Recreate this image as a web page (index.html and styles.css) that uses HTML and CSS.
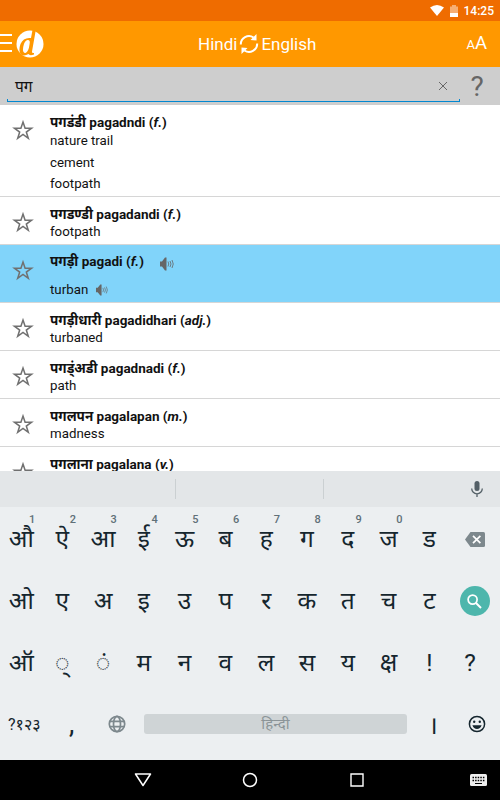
FILE: index.html
```
<!DOCTYPE html>
<html lang="hi">
<head>
  <meta charset="utf-8">
  <title>Hindi English Dictionary</title>
  <link rel="stylesheet" href="styles.css">
</head>
<body>
  <svg class="defs">
    <symbol id="star" viewBox="0 0 24 24">
      <path d="M12 4l2.100 6.200h6.500l-5.300 3.900 2 6.300-5.300-3.900-5.300 3.900 2-6.300-5.300-3.900h6.500z" fill="none" stroke="#707070" stroke-width="1.500"/>
    </symbol>
    <symbol id="speaker" viewBox="0 0 14 14">
      <path d="M0 4.500h2L5 .5h1.500v13H5L2 9.500H0z" fill="#666"/>
      <path d="M8 4.500q1.500 2.500 0 5M10 4q2 3 0 6M12 3q2.500 4 0 8" fill="none" stroke="#666" stroke-width=".8"/>
    </symbol>
  </svg>

  <div class="status">
    <svg width="14" height="11" viewBox="0 0 14 11"><path d="M0 2.500Q7-2.500 14 2.500L7 11z" fill="#fff"/></svg>
    <svg class="battery" width="8" height="12" viewBox="0 0 8 12"><path d="M0 1.500h2V0h4v1.500h2V12H0z" fill="#fff" opacity=".45"/><path d="M0 8h8v4H0z" fill="#fff"/></svg>
    <span>14:25</span>
  </div>

  <div class="toolbar">
    <div class="menu"><i></i><i></i><i></i></div>
    <svg class="logo" width="28" height="28" viewBox="0 0 28 28">
      <circle cx="14" cy="14" r="13.500" fill="#fff"/>
      <path d="M16.500 0h3.300L16 21.500q-.3 2 2 1.500v1.500q-4.500 1.500-5.500-.5-4.500 2.500-7.500.5-3-3.500-.5-10.500Q7.500 7 15 8z" fill="#ff9800"/>
      <path d="M11.500 10q3-.3 2.100 4-1 8-4.100 9-3.300 0-2.300-6 1-6 4.300-7z" fill="#fff"/>
    </svg>
    <div class="langs">
      <span>Hindi</span>
      <svg width="20" height="20" viewBox="0 0 20 20">
        <path d="M1.800 10.500A8.200 8.200 0 0 1 14.500 3.500M18.200 9.500A8.200 8.200 0 0 1 5.500 16.500" fill="none" stroke="#fff" stroke-width="2"/>
        <path d="M17.500 0v6.500l-6-.5zM2.500 20v-6.500l6 .5z" fill="#fff"/>
      </svg>
      <span>English</span>
    </div>
    <div class="size"><small>A</small>A</div>
  </div>

  <div class="search">
    <div class="field">
      <span>पग</span>
      <svg width="10" height="10" viewBox="0 0 10 10"><path d="M1 1l8 8M9 1l-8 8" stroke="#666" stroke-width="1"/></svg>
    </div>
    <div class="help">?</div>
  </div>

  <div class="results">
    <div class="entry first">
      <svg class="star"><use href="#star"/></svg>
      <div>
        <h4>पगडंडी pagadndi (<em>f.</em>)</h4>
        <p>nature trail</p>
        <p>cement</p>
        <p>footpath</p>
      </div>
    </div>
    <div class="entry">
      <svg class="star"><use href="#star"/></svg>
      <div>
        <h4>पगडण्डी pagadandi (<em>f.</em>)</h4>
        <p>footpath</p>
      </div>
    </div>
    <div class="entry selected">
      <svg class="star"><use href="#star"/></svg>
      <div>
        <h4>पगड़ी pagadi (<em>f.</em>) <svg class="speaker"><use href="#speaker"/></svg></h4>
        <p>turban <svg class="speaker small"><use href="#speaker"/></svg></p>
      </div>
    </div>
    <div class="entry">
      <svg class="star"><use href="#star"/></svg>
      <div>
        <h4>पगड़ीधारी pagadidhari (<em>adj.</em>)</h4>
        <p>turbaned</p>
      </div>
    </div>
    <div class="entry">
      <svg class="star"><use href="#star"/></svg>
      <div>
        <h4>पगड्ंअडी pagadnadi (<em>f.</em>)</h4>
        <p>path</p>
      </div>
    </div>
    <div class="entry">
      <svg class="star"><use href="#star"/></svg>
      <div>
        <h4>पगलपन pagalapan (<em>m.</em>)</h4>
        <p>madness</p>
      </div>
    </div>
    <div class="entry">
      <svg class="star"><use href="#star"/></svg>
      <div>
        <h4>पगलाना pagalana (<em>v.</em>)</h4>
      </div>
    </div>
  </div>

  <div class="suggest">
    <span></span><span></span>
    <svg width="12" height="16" viewBox="0 0 12 16">
      <rect x="3.500" y="0" width="5" height="10" rx="2.500" fill="#546067"/>
      <path d="M.7 7.500a5.300 5.300 0 0 0 10.600 0M6 12.500V16" fill="none" stroke="#546067" stroke-width="1.300"/>
    </svg>
  </div>

  <div class="keyboard">
    <div class="keys">
      <b>औ<sup>1</sup></b><b>ऐ<sup>2</sup></b><b>आ<sup>3</sup></b><b>ई<sup>4</sup></b><b>ऊ<sup>5</sup></b><b>ब<sup>6</sup></b><b>ह<sup>7</sup></b><b>ग<sup>8</sup></b><b>द<sup>9</sup></b><b>ज<sup>0</sup></b><b>ड</b>
      <div class="action">
        <svg width="20" height="15" viewBox="0 0 20 15"><path d="M5.500 0H18.500Q20 0 20 1.500v12q0 1.500-1.500 1.500H5.500L0 7.500z" fill="#7d888d"/><path d="M8 3.800l7.400 7.400M15.400 3.800L8 11.200" stroke="#fff" stroke-width="1.700"/></svg>
      </div>
    </div>
    <div class="keys">
      <b>ओ</b><b>ए</b><b>अ</b><b>इ</b><b>उ</b><b>प</b><b>र</b><b>क</b><b>त</b><b>च</b><b>ट</b>
      <div class="action">
        <div class="go">
          <svg width="15" height="15" viewBox="0 0 15 15"><circle cx="5.600" cy="5.600" r="4.500" fill="none" stroke="#fff" stroke-width="1.700"/><path d="M9 9l5 5" stroke="#fff" stroke-width="2"/></svg>
        </div>
      </div>
    </div>
    <div class="keys">
      <b>ऑ</b><b>◌्</b><b>◌ं</b><b>म</b><b>न</b><b>व</b><b>ल</b><b>स</b><b>य</b><b>क्ष</b><b>!</b><b>?</b>
    </div>
    <div class="keys bottom">
      <span class="sym">?१२३</span>
      <span class="comma">,</span>
      <svg class="globe" width="18" height="18" viewBox="0 0 18 18"><g fill="none" stroke="#7d888d" stroke-width="1.700"><circle cx="9" cy="9" r="7.700"/><ellipse cx="9" cy="9" rx="3.500" ry="7.700"/><path d="M1.800 6.300h14.400M1.800 11.700h14.400"/></g></svg>
      <span class="space">हिन्दी</span>
      <span class="danda">।</span>
      <svg class="smile" width="18" height="18" viewBox="0 0 18 18"><circle cx="9" cy="9" r="7.600" fill="none" stroke="#15262e" stroke-width="1.500"/><circle cx="6.200" cy="6.800" r="1.200" fill="#15262e"/><circle cx="11.800" cy="6.800" r="1.200" fill="#15262e"/><path d="M4.400 10.200h9.200q-1.300 3.800-4.600 3.800t-4.600-3.800z" fill="#15262e"/></svg>
    </div>
  </div>

  <div class="navbar">
    <svg width="18" height="14" viewBox="0 0 18 14"><path d="M1.500 1h15L9 12.500z" fill="none" stroke="#fff" stroke-width="1.500" stroke-linejoin="round"/></svg>
    <svg width="16" height="16" viewBox="0 0 16 16"><circle cx="8" cy="8" r="6.500" fill="none" stroke="#fff" stroke-width="1.500"/></svg>
    <svg class="recent" width="14" height="14" viewBox="0 0 14 14"><path d="M1 1h12v12H1z" fill="none" stroke="#fff" stroke-width="1.400"/></svg>
    <svg class="ime" width="17" height="12" viewBox="0 0 17 12"><rect width="17" height="12" rx="1.500" fill="#eee"/><path d="M2.500 3.500h12M2.500 6.500h12" stroke="#000" stroke-width="1.500" stroke-dasharray="1.500 1.100"/><path d="M5 9.500h7" stroke="#000"/></svg>
  </div>
</body>
</html>
```
FILE: styles.css
```
* {
  box-sizing: border-box;
}
body {
  margin: 0;
  width: 500px;
  height: 800px;
  overflow: hidden;
  background: #fff;
  font-family: Roboto, "Noto Sans", "Noto Sans Devanagari", sans-serif;
  color: #111;
}
svg {
  display: block;
  flex: none;
}
.defs {
  display: none;
}
.status {
  height: 21px;
  background: #ef6c00;
  color: #fff;
  display: flex;
  align-items: center;
  justify-content: flex-end;
  padding-right: 6px;
  font-size: 12px;
  font-weight: 500;
}
.battery {
  margin: 0 6px 0 6px;
}
.toolbar {
  height: 46px;
  background: #ff9800;
  color: #fff;
  display: flex;
  align-items: center;
}
.menu {
  width: 12px;
  display: flex;
  flex-direction: column;
  gap: 6px;
  margin-top: -3px;
}
.menu i {
  height: 2px;
  background: #fff;
}
.logo {
  margin-left: 4px;
}
.langs {
  display: flex;
  align-items: center;
  gap: 2px;
  margin: 0 0 0 154px;
  font-size: 17px;
}
.size {
  margin: -2px 0 0 auto;
  padding-right: 13px;
  font-size: 18.500px;
}
.size small {
  font-size: 13px;
}
.search {
  height: 38px;
  background: #cecece;
  display: flex;
}
.field {
  position: relative;
  width: 453px;
  height: 28px;
  margin: 7px 0 0 7px;
  padding: 0 12px 4px 8px;
  border-bottom: 1px solid #0288d1;
  display: flex;
  align-items: center;
  justify-content: space-between;
  font-size: 15.500px;
}
/* little upturned ends of the input underline */
.field::after {
  content: "";
  position: absolute;
  left: 0;
  right: 0;
  bottom: 0;
  height: 2px;
  border: 1px solid #0288d1;
  border-width: 0 1px;
}
.help {
  width: 34px;
  text-align: center;
  font-size: 28px;
  line-height: 39px;
  color: #666;
}
.results {
  height: 366px;
  overflow: hidden;
}
.entry {
  height: 48px;
  border-bottom: 1px solid #d6d6d6;
  display: flex;
}
.entry.first {
  height: 92px;
}
.entry.selected {
  height: 58px;
  background: #81d4fa;
}
.star {
  width: 24px;
  height: 24px;
  margin: 13px 15px 0 11px;
}
.entry h4 {
  margin: 9px 0 0;
  height: 17px;
  font-size: 13.500px;
  line-height: 17px;
  font-weight: 700;
  display: flex;
  white-space: pre;
}
.entry p {
  margin: 0 0 3.500px;
  height: 18px;
  font-size: 13.300px;
  line-height: 17px;
  display: flex;
}
.first p {
  line-height: 19px;
}
.selected h4 {
  margin-top: 8px;
}
.selected p {
  margin-top: 11px;
}
.speaker {
  width: 14px;
  height: 14px;
  margin: 4px 0 0 13px;
}
.speaker.small {
  width: 12px;
  height: 12px;
  margin: 3px 0 0 8px;
}
.suggest {
  height: 36px;
  background: #e3e6e8;
  display: flex;
  align-items: center;
}
.suggest span {
  width: 176px;
  height: 20px;
  border-right: 1px solid #cbd0d2;
}
.suggest span + span {
  width: 148px;
}
.suggest svg {
  margin-left: 147px;
}
.keyboard {
  height: 253px;
  background: #eceff1;
  color: #15262e;
}
.keys {
  height: 62px;
  display: flex;
  align-items: center;
  padding: 2px 0 0 1px;
}
.keys b {
  position: relative;
  width: 40.800px;
  text-align: center;
  font-size: 24.500px;
  font-weight: 400;
  line-height: 64px;
}
.keys sup {
  position: absolute;
  top: 7px;
  left: 28px;
  font-size: 11px;
  line-height: 12px;
  font-weight: 500;
  color: #607078;
}
.action {
  width: 50px;
  display: flex;
  justify-content: center;
}
.go {
  width: 30px;
  height: 30px;
  border-radius: 50%;
  background: #4db6ac;
  display: flex;
  align-items: center;
  justify-content: center;
}
.bottom {
  padding: 0 0 0 8px;
}
.sym {
  width: 61px;
  font-size: 16px;
}
.comma {
  width: 39px;
  font-size: 27px;
}
.space {
  width: 263px;
  height: 20px;
  margin-left: 18px;
  border-radius: 3px;
  background: #cfd4d6;
  color: #8b9498;
  text-align: center;
  font-size: 15px;
  line-height: 20px;
}
.danda {
  width: 52px;
  text-align: center;
  font-size: 25px;
}
.smile {
  margin-left: 9px;
}
.navbar {
  height: 40px;
  background: #000;
  display: flex;
  align-items: center;
  padding-left: 134px;
  gap: 90px;
}
.recent {
  margin-left: 2px;
}
.ime {
  margin-left: 16px;
}
```
